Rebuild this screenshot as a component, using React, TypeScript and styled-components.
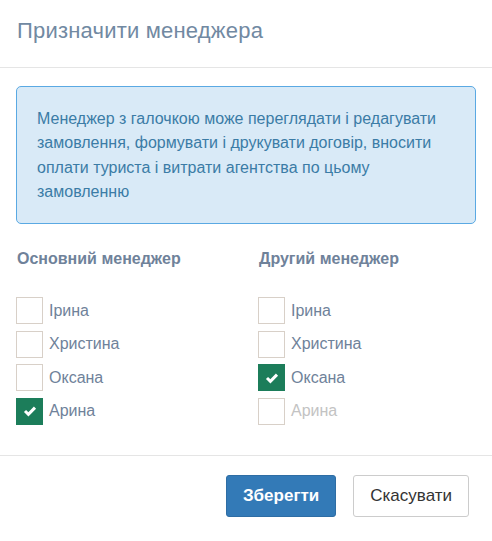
import React from "react";
import styled, { createGlobalStyle } from "styled-components";

const Global = createGlobalStyle`
  html, body { margin: 0; padding: 0; background: #fff; }
  body { font-family: "Liberation Sans", Arial, sans-serif; }
  * { box-sizing: border-box; }
`;

const Modal = styled.div`
  width: 492px;
  background: #fff;
`;

const Header = styled.div`
  height: 68px;
  padding: 0 17px 5px;
  display: flex;
  align-items: center;
  border-bottom: 1px solid #e5e5e5;
`;

const Title = styled.h4`
  margin: 0;
  font-size: 22px;
  font-weight: normal;
  color: #7189a2;
  line-height: 1;
  letter-spacing: 0.2px;
`;

const Body = styled.div`
  padding: 18px 16px 30px;
`;

const Alert = styled.div`
  background: #d9eaf7;
  border: 1px solid #5aa9e3;
  border-radius: 5px;
  padding: 20px 20px 19px;
  color: #3b7ca6;
  font-size: 16px;
  line-height: 24.3px;
`;

const Columns = styled.div`
  display: grid;
  grid-template-columns: 242px 1fr;
  margin-top: 23px;
`;

const Heading = styled.div`
  font-size: 16px;
  font-weight: bold;
  color: #6f829a;
  line-height: 24px;
  margin-bottom: 26px;
  padding-left: 1px;
`;

const List = styled.div`
  display: flex;
  flex-direction: column;
  gap: 6.5px;
`;

const Row = styled.label<{ $disabled?: boolean }>`
  display: flex;
  align-items: center;
  gap: 6px;
  font-size: 16px;
  color: ${(p) => (p.$disabled ? "#c3c3c3" : "#6f829a")};
`;

const Box = styled.span<{ $checked?: boolean }>`
  width: 27px;
  height: 27px;
  border: 1px solid ${(p) => (p.$checked ? "#1c7d5a" : "#d8d0c8")};
  background: ${(p) => (p.$checked ? "#1c7d5a" : "#fff")};
  display: flex;
  align-items: center;
  justify-content: center;
  flex: none;
`;

const Footer = styled.div`
  border-top: 1px solid #e5e5e5;
  padding: 19px 23px 19px;
  display: flex;
  justify-content: flex-end;
  gap: 17px;
`;

const Button = styled.button<{ $primary?: boolean }>`
  height: 42px;
  padding: 0 16px;
  font-family: "Liberation Sans", Arial, sans-serif;
  font-size: 17px;
  font-weight: ${(p) => (p.$primary ? "bold" : "normal")};
  border-radius: 3px;
  border: 1px solid ${(p) => (p.$primary ? "#2e6da4" : "#ccc")};
  background: ${(p) => (p.$primary ? "#337ab7" : "#fff")};
  color: ${(p) => (p.$primary ? "#fff" : "#333")};
`;

const Check = () => (
  <svg width="14" height="12" viewBox="0 0 14 12">
    <path d="M2 6 L5.4 9.3 L12 2.6" fill="none" stroke="#fff" strokeWidth="3" />
  </svg>
);

type Item = { name: string; checked?: boolean; disabled?: boolean };

const Column = ({ title, items }: { title: string; items: Item[] }) => (
  <div>
    <Heading>{title}</Heading>
    <List>
      {items.map((it) => (
        <Row key={it.name} $disabled={it.disabled}>
          <Box $checked={it.checked}>{it.checked && <Check />}</Box>
          {it.name}
        </Row>
      ))}
    </List>
  </div>
);

export default function App() {
  return (
    <>
      <Global />
      <Modal>
        <Header>
          <Title>Призначити менеджера</Title>
        </Header>
        <Body>
          <Alert>
            Менеджер з галочкою може переглядати і редагувати замовлення, формувати і друкувати
            договір, вносити оплати туриста і витрати агентства по цьому замовленню
          </Alert>
          <Columns>
            <Column
              title="Основний менеджер"
              items={[
                { name: "Ірина" },
                { name: "Христина" },
                { name: "Оксана" },
                { name: "Арина", checked: true },
              ]}
            />
            <Column
              title="Другий менеджер"
              items={[
                { name: "Ірина" },
                { name: "Христина" },
                { name: "Оксана", checked: true },
                { name: "Арина", disabled: true },
              ]}
            />
          </Columns>
        </Body>
        <Footer>
          <Button $primary>Зберегти</Button>
          <Button>Скасувати</Button>
        </Footer>
      </Modal>
    </>
  );
}
